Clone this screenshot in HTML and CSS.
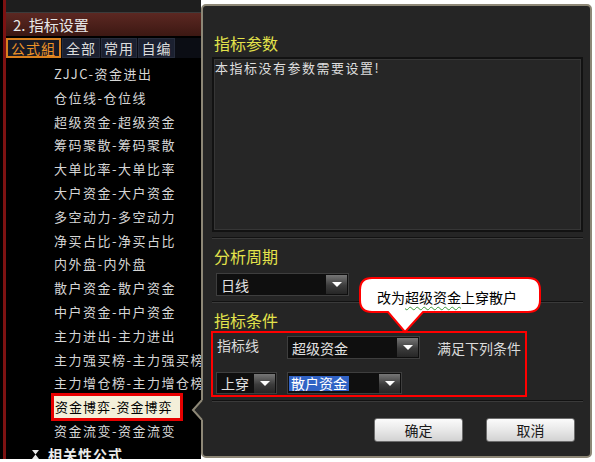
FILE: index.html
```html
<!DOCTYPE html>
<html lang="zh-CN">
<head>
    <meta charset="UTF-8">
    <meta name="viewport" content="width=device-width, initial-scale=1.0">
    <title>指标设置</title>
    <link rel="stylesheet" href="styles.css">
</head>
<body>

<div class="screen">
    <aside class="sidebar">
        <div class="sidebar-inner">
            <div class="topbar"></div>
            <div class="panel-title">2. 指标设置</div>
            <div class="tabs">
                <span class="tab tab-first active">公式組</span>
                <span class="tab tab-all">全部</span>
                <span class="tab tab-common">常用</span>
                <span class="tab tab-own">自编</span>
            </div>
            <ul class="formula-list">
                <li>ZJJC-资金进出</li>
                <li>仓位线-仓位线</li>
                <li>超级资金-超级资金</li>
                <li>筹码聚散-筹码聚散</li>
                <li>大单比率-大单比率</li>
                <li>大户资金-大户资金</li>
                <li>多空动力-多空动力</li>
                <li>净买占比-净买占比</li>
                <li>内外盘-内外盘</li>
                <li>散户资金-散户资金</li>
                <li>中户资金-中户资金</li>
                <li>主力进出-主力进出</li>
                <li>主力强买榜-主力强买榜</li>
                <li>主力增仓榜-主力增仓榜</li>
                <li class="selected"><span>资金博弈-资金博弈</span></li>
                <li>资金流变-资金流变</li>
                <li class="group">
                    <svg class="group-icon" width="7" height="9" viewBox="0 0 7 9">
                        <path d="M0 0 H7 L3.5 4.5 Z M0 9 H7 L3.5 4.5 Z" fill="#e8e8e8"/>
                    </svg>
                    相关性公式
                </li>
            </ul>
        </div>
    </aside>

    <section class="dialog">
        <svg class="dialog-arrow" width="14" height="20" viewBox="0 0 14 20">
            <path d="M10 0 L1 10 L10 20 H14 V0 Z" fill="#252525"/>
            <path d="M11 0 L2 10 L11 20" fill="none" stroke="#8d8776" stroke-width="2"/>
        </svg>

        <h3 class="section-title first">指标参数</h3>
        <div class="param-box">本指标没有参数需要设置!</div>
        <div class="sep"></div>

        <h3 class="section-title">分析周期</h3>
        <div class="select period">日线<span class="drop"></span></div>
        <div class="sep"></div>

        <h3 class="section-title">指标条件</h3>
        <div class="condition">
            <div class="cond-row">
                <span class="cond-label">指标线</span>
                <div class="select line-a">超级资金<span class="drop"></span></div>
                <span class="cond-note">满足下列条件</span>
            </div>
            <div class="cond-row second">
                <div class="select cross">上穿<span class="drop"></span></div>
                <div class="select line-b"><span class="hl">散户资金</span><span class="drop"></span></div>
            </div>
        </div>
        <div class="sep bottom"></div>

        <div class="actions">
            <button class="btn">确定</button>
            <button class="btn">取消</button>
        </div>

        <div class="bubble">
            <svg class="bubble-shape" width="182" height="57" viewBox="0 0 182 57">
                <path d="M13 1 H169 Q181 1 181 13 V23 Q181 35 169 35 H64 L46 55 L29 35 H13 Q1 35 1 23 V13 Q1 1 13 1 Z" fill="#fff" stroke="#ff0000" stroke-width="2"/>
            </svg>
            <span class="bubble-text">改为<u class="spell">超级资金</u>上穿散户</span>
        </div>
    </section>
</div>

</body>
</html>
```

FILE: styles.css
```css
body {
    margin: 0;
    padding: 0;
    background: #fff;
    font-family: "Noto Sans CJK SC", "Liberation Sans", sans-serif;
}

.screen {
    width: 595px;
    height: 462px;
    display: flex;
    align-items: flex-start;
    overflow: hidden;
}

/* left formula list */

.sidebar {
    width: 201px;
    height: 459px;
    flex-shrink: 0;
    box-sizing: border-box;
    padding-left: 3px;
    background: #000;
    overflow: hidden;
}

.sidebar-inner {
    height: 100%;
    border-left: 3px solid #7d1212;
}

.topbar {
    height: 12px;
    background: #1e1e1e;
    border-bottom: 1px solid #3b3b3b;
}

.panel-title {
    height: 23px;
    line-height: 23px;
    padding-left: 7px;
    background: linear-gradient(#5c2822, #3c1813);
    color: #e8e8e8;
    font-size: 15px;
    white-space: pre;
}

.tabs {
    display: flex;
    margin-top: 2px;
    height: 20px;
    background: #0b0d14;
}

.tab {
    box-sizing: border-box;
    height: 20px;
    line-height: 18px;
    margin-right: 1px;
    text-align: center;
    font-size: 14px;
    letter-spacing: 1px;
    color: #dcdcdc;
    background: #1b2030;
    border: 1px solid #262c3c;
}

.tab-first { width: 55px; }
.tab-all { width: 38px; }
.tab-common { width: 36px; }
.tab-own { width: 37px; }

.tab.active {
    color: #ec9328;
    background: #161a26;
    border: 2px solid #d9801e;
    line-height: 16px;
}

.formula-list {
    list-style: none;
    margin: 0;
    padding: 4px 0 0 0;
}

.formula-list li {
    height: 23.8px;
    line-height: 23.8px;
    padding-left: 48px;
    font-size: 13px;
    letter-spacing: 1.5px;
    color: #d6d6d6;
    white-space: nowrap;
}

.formula-list li.selected {
    display: flex;
    align-items: center;
}

.selected span {
    display: block;
    width: 125px;
    height: 22px;
    line-height: 22px;
    padding-left: 1px;
    background: #f3efd9;
    color: #000;
    letter-spacing: 1px;
    outline: 3px solid #e60000;
}

.formula-list li.group {
    display: flex;
    align-items: center;
    padding-left: 26px;
    font-size: 14px;
    font-weight: bold;
    letter-spacing: 1px;
    color: #ececec;
}

.group-icon {
    margin-right: 9px;
}

/* settings dialog */

.dialog {
    position: relative;
    width: 391px;
    height: 454px;
    margin-top: 4px;
    box-sizing: border-box;
    padding: 0 7px 0 9px;
    background: #252525;
    border: 2px solid #8d8776;
    border-radius: 5px;
    flex-shrink: 0;
}

.dialog-arrow {
    position: absolute;
    left: -12px;
    top: 394px;
}

.section-title {
    margin: 7px 0 0 0;
    padding-left: 2px;
    height: 20px;
    line-height: 20px;
    font-size: 16px;
    font-weight: normal;
    color: #e3e34b;
}

.section-title.first {
    margin-top: 27px;
}

.param-box {
    margin-top: 4px;
    height: 175px;
    box-sizing: border-box;
    padding: 1px 1px;
    border: 2px solid #121212;
    box-shadow: inset 0 0 0 1px #363636;
    background: #262626;
    font-size: 13px;
    line-height: 16px;
    letter-spacing: 1.5px;
    color: #dedede;
}

.sep {
    margin-top: 5px;
    height: 1px;
    background: #121212;
    border-bottom: 1px solid #3a3a3a;
}

.select {
    box-sizing: border-box;
    display: flex;
    align-items: center;
    height: 23px;
    padding-left: 4px;
    background: #0f0f0f;
    border: 1px solid #3e3e3e;
    font-size: 14px;
    color: #e2e2e2;
}

.drop {
    margin-left: auto;
    width: 21px;
    height: 19px;
    margin-right: 1px;
    display: flex;
    align-items: center;
    justify-content: center;
    background: linear-gradient(#767676, #3c3c3c 55%, #262626);
}

.drop::after {
    content: "";
    border-left: 5px solid transparent;
    border-right: 5px solid transparent;
    border-top: 5px solid #fff;
}

.select.period {
    margin: 7px 0 0 4px;
    width: 133px;
}

.sep + .section-title {
    margin-top: 7px;
}

.condition {
    margin: 1px 0 0 -1px;
    width: 316px;
    height: 66px;
    box-sizing: border-box;
    padding: 3px 0 0 3px;
    border: 2px solid #ff0000;
}

.cond-row {
    display: flex;
    align-items: center;
}

.cond-row.second {
    margin-top: 13px;
}

.cond-label {
    width: 70px;
    padding-left: 1px;
    font-size: 14px;
    color: #dadada;
    align-self: flex-start;
    line-height: 18px;
}

.select.line-a {
    width: 133px;
}

.cond-note {
    margin-left: 17px;
    font-size: 14px;
    color: #dadada;
}

.select.cross {
    width: 61px;
    height: 22px;
}

.select.line-b {
    margin-left: 10px;
    width: 115px;
    height: 22px;
    padding-left: 1px;
}

.hl {
    padding: 0 2px;
    line-height: 15px;
    background: #3163c5;
    color: #fff;
}

.sep.bottom {
    margin-top: 3px;
}

.actions {
    display: flex;
    justify-content: flex-end;
    gap: 23px;
    margin-top: 16px;
    padding-right: 8px;
}

.btn {
    width: 89px;
    height: 24px;
    padding: 0;
    border: 1px solid #6c6c6c;
    border-radius: 3px;
    background: linear-gradient(#fbfbfb, #e8e8e8 50%, #d2d2d2);
    font-family: inherit;
    font-size: 14px;
    color: #1a1a1a;
}

/* annotation bubble */

.bubble {
    position: absolute;
    left: 156px;
    top: 271px;
    width: 182px;
    height: 57px;
}

.bubble-shape {
    position: absolute;
    left: 0;
    top: 0;
}

.bubble-text {
    position: absolute;
    left: 18px;
    top: 10px;
    line-height: 20px;
    font-size: 14px;
    color: #000;
    white-space: nowrap;
}

.spell {
    text-decoration: underline wavy #3c9a3c;
    text-decoration-thickness: 1px;
    text-underline-offset: 3px;
}
```
